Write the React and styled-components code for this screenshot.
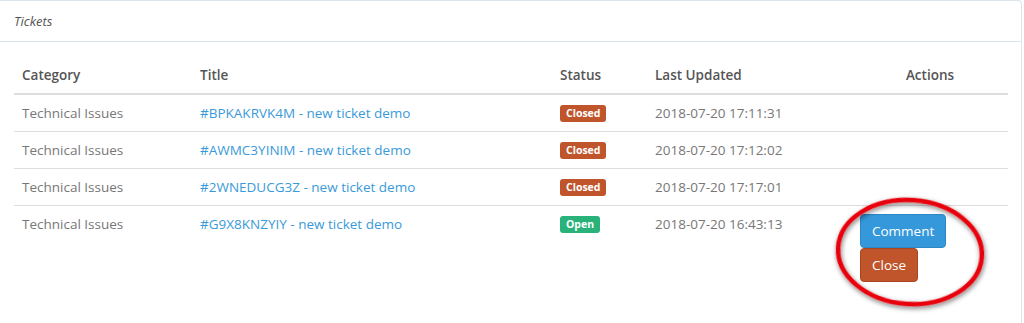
import React from "react";
import styled, { createGlobalStyle } from "styled-components";

const Global = createGlobalStyle`
  html, body { margin: 0; padding: 0; background: #fff; }
  body {
    font-family: "Open Sans", "Liberation Sans", sans-serif;
    font-size: 13.5px;
    line-height: 20px;
    color: #777;
    overflow: hidden;
  }
`;

const Page = styled.div`
  position: relative;
  width: 1024px;
  height: 323px;
  overflow: hidden;
`;

const Panel = styled.section`
  margin-left: -1px;
  width: 1023px;
  border: 1px solid #dce5ec;
  border-bottom: none;
  border-radius: 0 4px 0 0;
  height: 340px;
  box-sizing: border-box;
`;

const Heading = styled.header`
  height: 41px;
  box-sizing: border-box;
  padding: 10px 14px 0;
  border-bottom: 1px solid #dce5ec;
  font-style: italic;
  color: #555;
  font-size: 13px;
`;

const Body = styled.div`
  padding: 15px 13px 0 14px;
`;

const Table = styled.table`
  width: 994px;
  border-collapse: collapse;
  table-layout: fixed;
`;

const Th = styled.th`
  box-sizing: border-box;
  width: ${(p) => p.$w}px;
  text-align: ${(p) => p.$align || "left"};
  padding: 8px;
  font-weight: 600;
  color: #555;
  border-bottom: 2px solid #ddd;
`;

const Td = styled.td`
  padding: 8px;
  height: 20px;
  line-height: 20px;
  vertical-align: top;
  border-top: ${(p) => (p.$first ? "none" : "1px solid #ddd")};
`;

const Link = styled.a`
  color: #3a9ad9;
  text-decoration: none;
`;

const Label = styled.span`
  display: inline-block;
  vertical-align: top;
  margin-top: 2px;
  font-size: 10.5px;
  font-weight: 700;
  line-height: 11px;
  padding: 3px 6px;
  border-radius: 3px;
  color: #fff;
  background: ${(p) => (p.$open ? "#2ab27b" : "#c0552b")};
`;

const Buttons = styled.div`
  display: flex;
  flex-direction: column;
  align-items: flex-start;
`;

const Button = styled.button`
  font-family: inherit;
  font-size: 13.5px;
  line-height: 20px;
  padding: 6px 11px;
  color: #fff;
  border-radius: 4px;
  border: 1px solid ${(p) => (p.$variant === "danger" ? "#a8461f" : "#2a88c5")};
  background: ${(p) => (p.$variant === "danger" ? "#c0552b" : "#3498db")};
  cursor: pointer;
`;

const Annotation = styled.svg`
  position: absolute;
  left: 820px;
  top: 186px;
  overflow: visible;
`;

const rows = [
  { id: "#BPKAKRVK4M", open: false, date: "2018-07-20 17:11:31" },
  { id: "#AWMC3YINIM", open: false, date: "2018-07-20 17:12:02" },
  { id: "#2WNEDUCG3Z", open: false, date: "2018-07-20 17:17:01" },
  { id: "#G9X8KNZYIY", open: true, date: "2018-07-20 16:43:13" },
];

export default function App() {
  return (
    <Page>
      <Global />
      <Panel>
        <Heading>Tickets</Heading>
        <Body>
          <Table>
            <thead>
              <tr>
                <Th $w={178}>Category</Th>
                <Th $w={360}>Title</Th>
                <Th $w={95}>Status</Th>
                <Th $w={205}>Last Updated</Th>
                <Th $w={156} $align="center">Actions</Th>
              </tr>
            </thead>
            <tbody>
              {rows.map((r, i) => (
                <tr key={r.id}>
                  <Td $first={i === 0}>Technical Issues</Td>
                  <Td $first={i === 0}>
                    <Link href="#">{r.id} - new ticket demo</Link>
                  </Td>
                  <Td $first={i === 0}>
                    <Label $open={r.open}>{r.open ? "Open" : "Closed"}</Label>
                  </Td>
                  <Td $first={i === 0}>{r.date}</Td>
                  <Td $first={i === 0}>
                    {r.open && (
                      <Buttons>
                        <Button>Comment</Button>
                        <Button $variant="danger">Close</Button>
                      </Buttons>
                    )}
                  </Td>
                </tr>
              ))}
            </tbody>
          </Table>
        </Body>
      </Panel>
      <Annotation width="180" height="140" viewBox="0 0 180 140">
        <defs>
          <filter id="sh" x="-30%" y="-30%" width="160%" height="160%">
            <feDropShadow dx="1" dy="2" stdDeviation="2.5" floodColor="#000" floodOpacity="0.55" />
          </filter>
        </defs>
        <ellipse
          cx="90"
          cy="66"
          rx="72"
          ry="52"
          fill="none"
          stroke="#e8000b"
          strokeWidth="4.5"
          filter="url(#sh)"
          transform="rotate(4 90 66)"
        />
      </Annotation>
    </Page>
  );
}
